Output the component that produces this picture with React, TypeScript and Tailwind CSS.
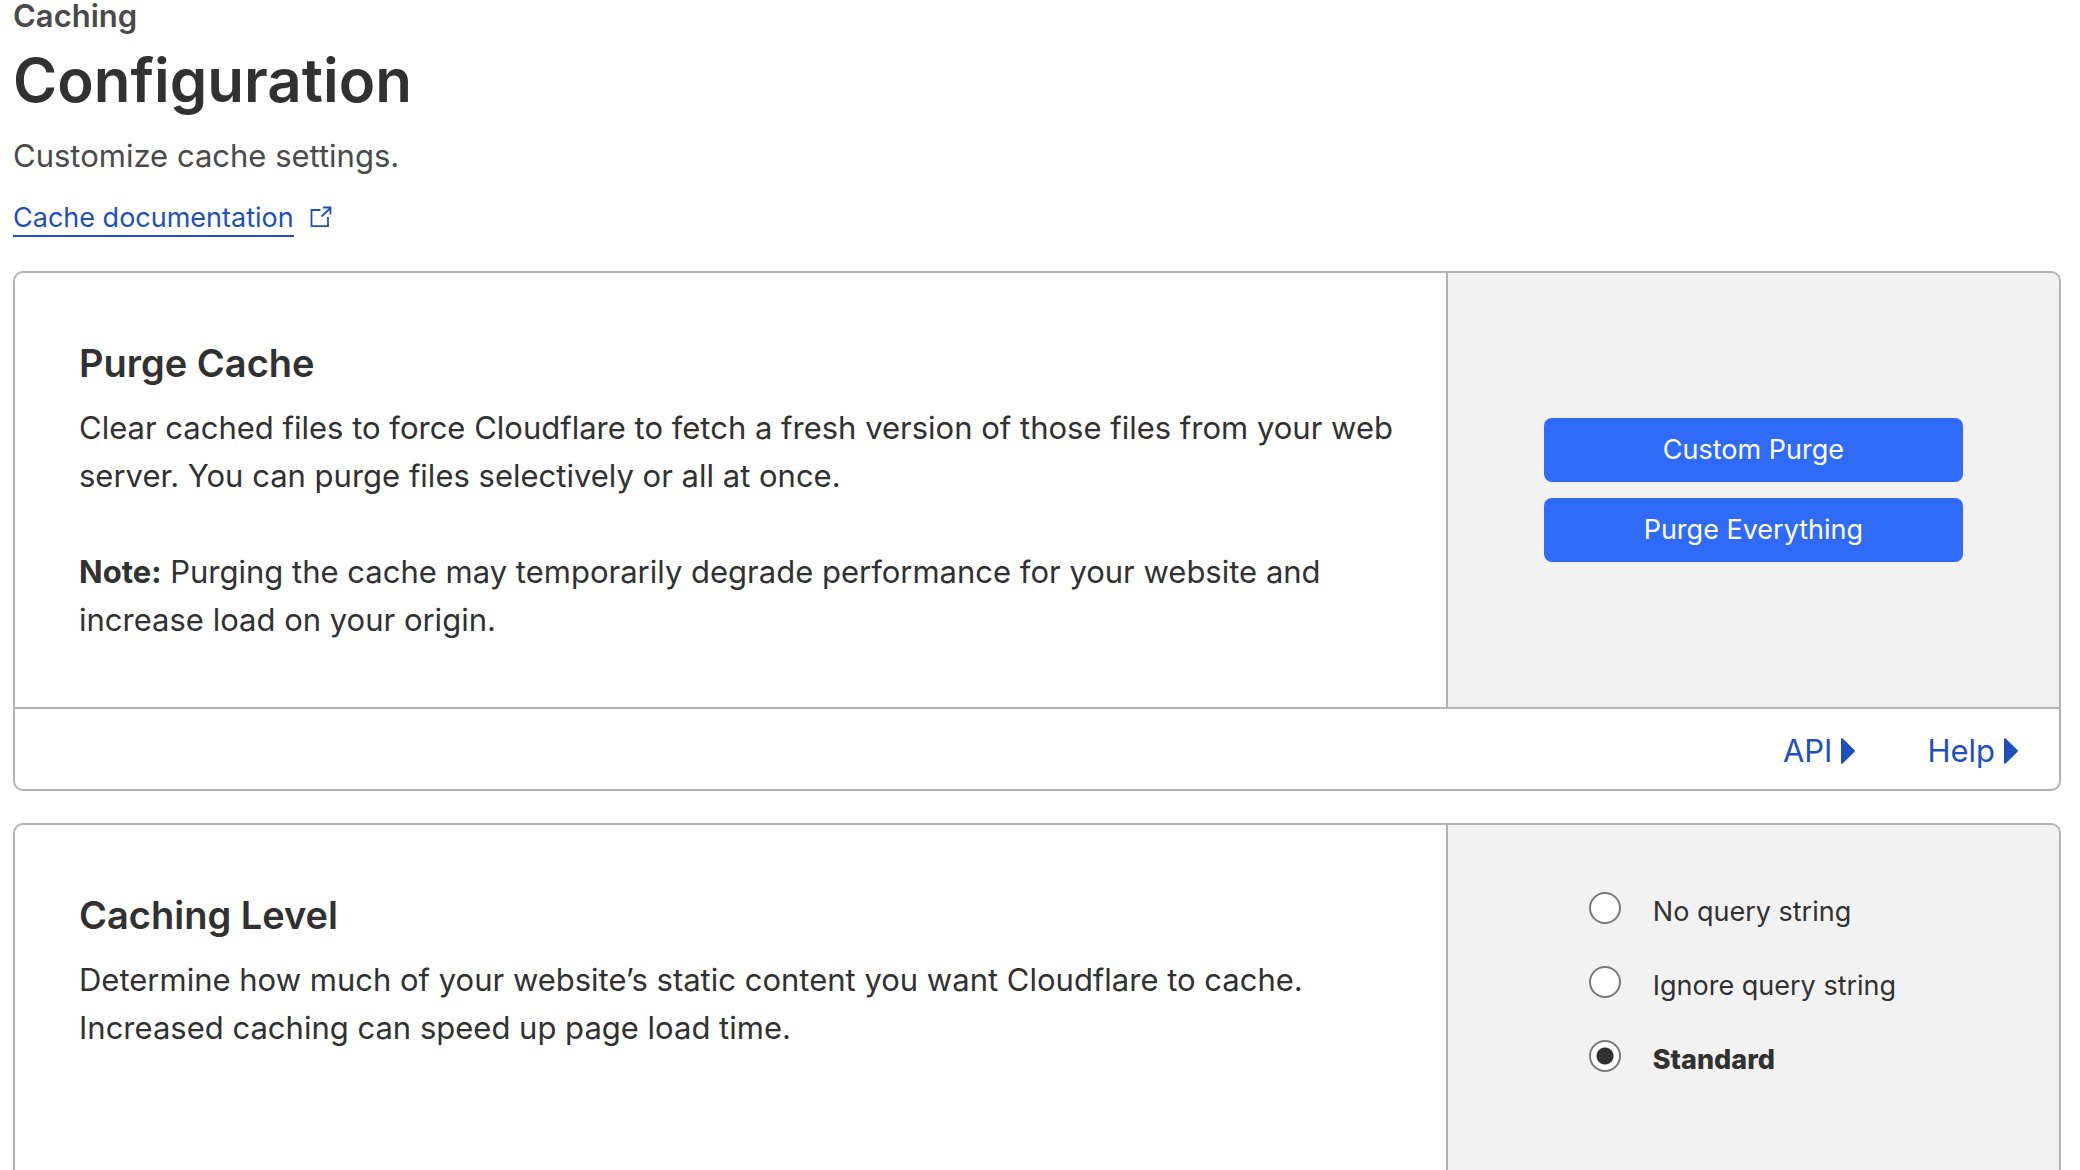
import type { ReactNode } from "react";

const CACHING_LEVELS = [
  { value: "basic", label: "No query string" },
  { value: "simplified", label: "Ignore query string" },
  { value: "aggressive", label: "Standard", selected: true },
];

function ExternalIcon() {
  return (
    <svg viewBox="0 0 22 22" className="mb-1 size-[22px]" fill="none" stroke="currentColor" strokeWidth="1.8" aria-hidden="true">
      <path d="M10.500 4H1.500v16.200h16.500V11" />
      <path d="M11.500 10.500l9-8.500M13 1.500h7.500v7" />
    </svg>
  );
}

function Caret() {
  return (
    <svg viewBox="0 0 14 26" className="h-[26px] w-[14px]" fill="currentColor" aria-hidden="true">
      <path d="M0 1.2C0 .2 1 -.2 1.700.5L13.600 12.300a1 1 0 0 1 0 1.400L1.700 25.500C1 26.200 0 25.800 0 24.800z" />
    </svg>
  );
}

function Card({ title, body, control, footer }: { title: string; body: ReactNode; control: ReactNode; footer?: ReactNode }) {
  return (
    <section className="overflow-hidden rounded-[10px] border-2 border-[#b3b3b3]">
      <div className="flex min-h-[434px]">
        <div className="w-[70%] pt-[65px] pr-12 pb-[63px] pl-16">
          <h2 className="mb-4 text-[38px] leading-[50px] font-semibold">{title}</h2>
          <div className="text-[31px] leading-[48px]">{body}</div>
        </div>
        <div className="w-[30%] border-l-2 border-[#b3b3b3] bg-[#f2f2f2]">{control}</div>
      </div>
      {footer}
    </section>
  );
}

export default function App() {
  return (
    <main className="h-screen overflow-hidden bg-white pr-[19px] pl-[13px] font-[Inter,sans-serif] text-[#313131]">
      <header className="mb-[34px]">
        <p className="text-[31px] leading-8 font-semibold text-[#4a4a4a]">Caching</p>
        <h1 className="mt-2 text-[60px] leading-[80px] font-semibold">Configuration</h1>
        <p className="mt-3 text-[31px] leading-[48px] text-[#4a4a4a]">Customize cache settings.</p>
        <div className="mt-[21px] flex items-center gap-4 text-[#1f4fbd]">
          <a href="#cache-documentation" className="border-b-2 border-current text-[27px] leading-[34px]">
            Cache documentation
          </a>
          <ExternalIcon />
        </div>
      </header>

      <div className="flex flex-col gap-8">
        <Card
          title="Purge Cache"
          body={
            <>
              <p>
                Clear cached files to force Cloudflare to fetch a fresh version of those files from your web server. You
                can purge files selectively or all at once.
              </p>
              <p className="mt-12">
                <strong className="font-bold">Note:</strong> Purging the cache may temporarily degrade performance for
                your website and increase load on your origin.
              </p>
            </>
          }
          control={
            <div className="flex h-full flex-col justify-center gap-4 px-24 text-[27px] text-white">
              <button type="button" className="h-16 rounded-lg bg-[#2f6bf8]">Custom Purge</button>
              <button type="button" className="h-16 rounded-lg bg-[#2f6bf8]">Purge Everything</button>
            </div>
          }
          footer={
            <div className="flex h-[82px] items-center justify-end gap-[72px] border-t-2 border-[#b3b3b3] pt-1 pr-[41px] text-[31px] text-[#1f4fbd]">
              <a href="#api" className="flex items-center gap-[9px]">API <Caret /></a>
              <a href="#help" className="flex items-center gap-[9px]">Help <Caret /></a>
            </div>
          }
        />

        <Card
          title="Caching Level"
          body={
            <p>
              Determine how much of your website’s static content you want Cloudflare to cache. Increased caching can
              speed up page load time.
            </p>
          }
          control={
            <fieldset aria-label="Caching Level" className="flex flex-col gap-[34px] px-[141px] pt-[67px] text-[27px] leading-[40px]">
              {CACHING_LEVELS.map((level) => (
                <label key={level.value} className="flex items-start gap-8 whitespace-nowrap">
                  <input
                    type="radio"
                    name="caching-level"
                    value={level.value}
                    defaultChecked={level.selected}
                    className="peer size-8 shrink-0 appearance-none rounded-full border-2 border-[#797979] bg-white checked:bg-[radial-gradient(circle,#313131_8px,white_9px)]"
                  />
                  <span className="peer-checked:font-extrabold">{level.label}</span>
                </label>
              ))}
            </fieldset>
          }
        />
      </div>
    </main>
  );
}
